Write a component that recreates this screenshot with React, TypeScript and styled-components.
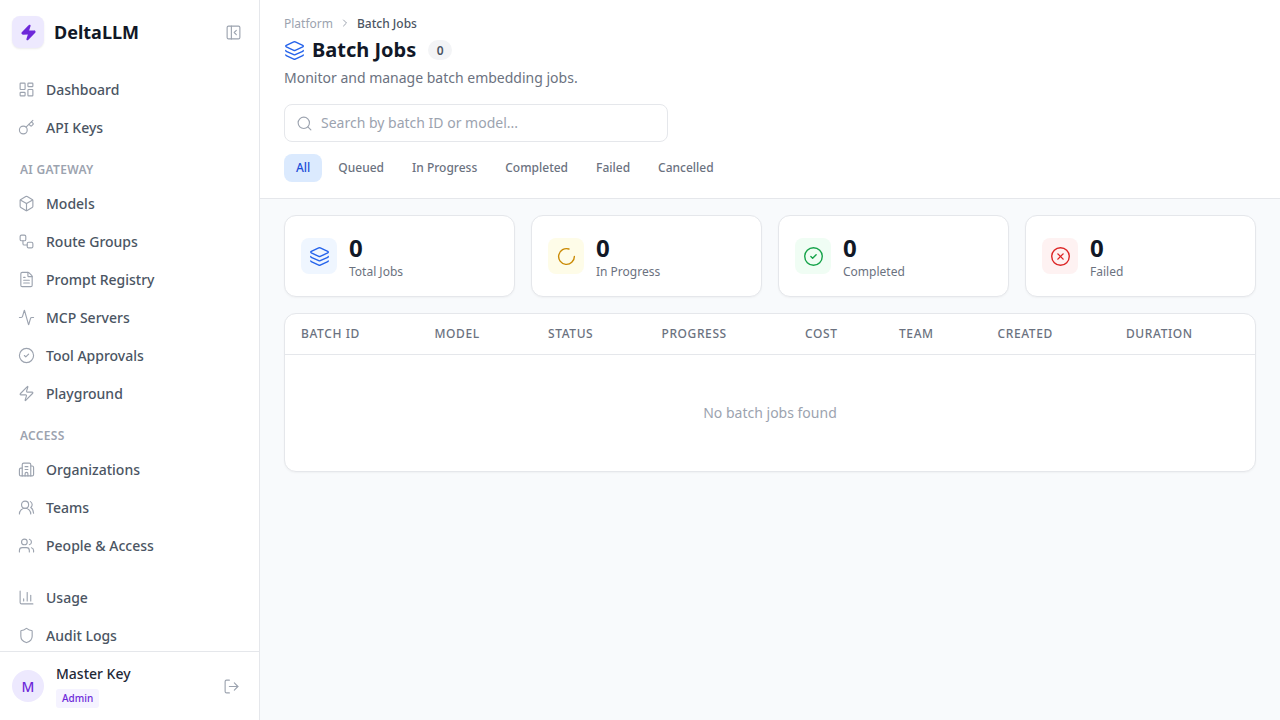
import React from 'react';
import styled, { createGlobalStyle } from 'styled-components';
import {
  Activity,
  Box,
  Building2,
  ChartColumn,
  ChevronRight,
  CircleCheck,
  CircleX,
  FileText,
  Key,
  Layers,
  LayoutDashboard,
  LoaderCircle,
  LogOut,
  PanelLeftClose,
  Search,
  Shield,
  Users,
  UsersRound,
  Workflow,
  Zap,
} from 'lucide-react';

const GlobalStyle = createGlobalStyle`
  * { box-sizing: border-box; }
  html, body { margin: 0; height: 100%; overflow: hidden; }
  body {
    font-family: "Noto Sans", "Liberation Sans", sans-serif;
    background: #f8fafc;
    color: #111827;
  }
`;

const Shell = styled.div`
  display: flex;
  width: 1280px;
  height: 720px;
`;

const Sidebar = styled.aside`
  width: 260px;
  flex-shrink: 0;
  background: #fff;
  border-right: 1px solid #e5e7eb;
  display: flex;
  flex-direction: column;
`;

const Brand = styled.div`
  height: 64px;
  padding: 0 17.5px 0 12px;
  display: flex;
  align-items: center;
  gap: 10px;
`;

const LogoTile = styled.div`
  width: 32px;
  height: 32px;
  border-radius: 8px;
  background: #ede9fe;
  color: #6d28d9;
  display: flex;
  align-items: center;
  justify-content: center;
  box-shadow: 0 1px 2px rgba(0, 0, 0, 0.08);
`;

const BrandName = styled.div`
  flex: 1;
  font-size: 18px;
  font-weight: 700;
  color: #111827;
`;

const Nav = styled.nav`
  flex: 1;
  min-height: 0;
  overflow: hidden;
  padding-top: 6px;
  display: flex;
  flex-direction: column;
`;

const NavItem = styled.a`
  height: 38px;
  flex-shrink: 0;
  padding-left: 17.5px;
  display: flex;
  align-items: center;
  gap: 11.5px;
  font-size: 14px;
  font-weight: 500;
  color: #4b5563;
  svg { color: #9ca3af; }
`;

const NavHeading = styled.div`
  height: 28px;
  flex-shrink: 0;
  margin: 9px 0 1px;
  padding-left: 20px;
  display: flex;
  align-items: center;
  font-size: 12px;
  font-weight: 600;
  letter-spacing: 0.3px;
  color: #9ca3af;
`;

const NavGap = styled.div`
  height: 14px;
  flex-shrink: 0;
`;

const UserBar = styled.div`
  height: 69px;
  flex-shrink: 0;
  border-top: 1px solid #e5e7eb;
  padding: 0 19.5px 0 12px;
  display: flex;
  align-items: center;
  gap: 12px;
  color: #9ca3af;
`;

const Avatar = styled.div`
  width: 32px;
  height: 32px;
  border-radius: 50%;
  background: #ede9fe;
  color: #6d28d9;
  font-size: 14px;
  font-weight: 500;
  display: flex;
  align-items: center;
  justify-content: center;
`;

const UserInfo = styled.div`
  flex: 1;
  padding-bottom: 1px;
`;

const UserName = styled.div`
  font-size: 14px;
  font-weight: 500;
  line-height: 20px;
  color: #1f2937;
`;

const RoleTag = styled.span`
  display: inline-block;
  margin-top: 5px;
  padding: 0 6px;
  height: 19px;
  line-height: 19px;
  font-size: 10px;
  font-weight: 500;
  border-radius: 3px;
  color: #6d28d9;
  background: #f5f3ff;
`;

const Main = styled.main`
  flex: 1;
  min-width: 0;
  display: flex;
  flex-direction: column;
`;

const PageHead = styled.header`
  height: 199px;
  background: #fff;
  border-bottom: 1px solid #e5e7eb;
  padding: 14px 24px 0;
`;

const Crumbs = styled.div`
  height: 18px;
  display: flex;
  align-items: center;
  gap: 6px;
  font-size: 12px;
  color: #9ca3af;
  svg { color: #9ca3af; }
`;

const CrumbNow = styled.span`
  font-weight: 500;
  color: #4b5563;
`;

const TitleRow = styled.div`
  margin-top: 2px;
  height: 32px;
  display: flex;
  align-items: center;
  color: #2563eb;
`;

const Title = styled.h1`
  margin: 0 12px 0 7px;
  font-size: 20px;
  line-height: 32px;
  font-weight: 700;
  color: #111827;
`;

const CountPill = styled.span`
  min-width: 24px;
  height: 20px;
  border-radius: 10px;
  background: #f3f4f6;
  color: #4b5563;
  font-size: 12px;
  font-weight: 600;
  display: flex;
  align-items: center;
  justify-content: center;
`;

const Subtitle = styled.p`
  margin: 2px 0 0;
  font-size: 14px;
  line-height: 20px;
  color: #6b7280;
`;

const SearchBox = styled.label`
  margin-top: 16px;
  width: 384px;
  height: 38px;
  padding: 0 10.5px;
  border: 1px solid #e5e7eb;
  border-radius: 8px;
  background: #fff;
  display: flex;
  align-items: center;
  gap: 8.5px;
  color: #9ca3af;
`;

const SearchInput = styled.input`
  flex: 1;
  border: 0;
  outline: 0;
  padding: 0 0 1px;
  font: inherit;
  font-size: 14px;
  background: transparent;
  &::placeholder { color: #9ca3af; opacity: 1; }
`;

const Tabs = styled.div`
  margin-top: 12px;
  display: flex;
  gap: 4px;
`;

const Tab = styled.button<{ $active?: boolean }>`
  height: 28px;
  padding: 0 12px 1px;
  border: 0;
  border-radius: 8px;
  font-family: inherit;
  font-size: 12px;
  font-weight: 500;
  color: ${(p) => (p.$active ? '#1d4ed8' : '#6b7280')};
  background: ${(p) => (p.$active ? '#dbeafe' : 'transparent')};
`;

const Body = styled.div`
  flex: 1;
  padding: 16px 24px;
`;

const StatGrid = styled.div`
  display: grid;
  grid-template-columns: repeat(4, 1fr);
  gap: 16px;
`;

const StatCard = styled.div`
  height: 82px;
  padding: 0 16px;
  background: #fff;
  border: 1px solid #e5e7eb;
  border-radius: 12px;
  box-shadow: 0 1px 2px rgba(0, 0, 0, 0.04);
  display: flex;
  align-items: center;
  gap: 12px;
`;

const StatIcon = styled.div<{ $bg: string; $fg: string }>`
  width: 36px;
  height: 36px;
  border-radius: 8px;
  background: ${(p) => p.$bg};
  color: ${(p) => p.$fg};
  display: flex;
  align-items: center;
  justify-content: center;
`;

const StatValue = styled.div`
  font-size: 24px;
  font-weight: 700;
  line-height: 32px;
  color: #111827;
`;

const StatLabel = styled.div`
  font-size: 12px;
  line-height: 16px;
  color: #6b7280;
`;

const TableCard = styled.section`
  margin-top: 16px;
  height: 159px;
  background: #fff;
  border: 1px solid #e5e7eb;
  border-radius: 12px;
  box-shadow: 0 1px 2px rgba(0, 0, 0, 0.04);
`;

const TableHead = styled.div`
  height: 41px;
  padding: 0 0 2px 16px;
  border-bottom: 1px solid #e5e7eb;
  display: grid;
  grid-template-columns: 133.5px 113.5px 113.5px 143.5px 94px 98.5px 128.5px 1fr;
  align-items: center;
`;

const HeadCell = styled.div`
  font-size: 12px;
  font-weight: 500;
  letter-spacing: 0.6px;
  color: #6b7280;
`;

const EmptyRow = styled.div`
  height: 116px;
  padding-bottom: 2px;
  display: flex;
  align-items: center;
  justify-content: center;
  font-size: 14px;
  color: #9ca3af;
`;

const stroke = 1.6;

const App = () => {
  return (
    <Shell>
      <GlobalStyle />
      <Sidebar>
        <Brand>
          <LogoTile>
            <Zap size={17} fill="currentColor" />
          </LogoTile>
          <BrandName>DeltaLLM</BrandName>
          <PanelLeftClose size={17} strokeWidth={stroke} color="#9ca3af" />
        </Brand>
        <Nav>
          <NavItem><LayoutDashboard size={17} strokeWidth={stroke} />Dashboard</NavItem>
          <NavItem><Key size={17} strokeWidth={stroke} />API Keys</NavItem>
          <NavHeading>AI GATEWAY</NavHeading>
          <NavItem><Box size={17} strokeWidth={stroke} />Models</NavItem>
          <NavItem><Workflow size={17} strokeWidth={stroke} />Route Groups</NavItem>
          <NavItem><FileText size={17} strokeWidth={stroke} />Prompt Registry</NavItem>
          <NavItem><Activity size={17} strokeWidth={stroke} />MCP Servers</NavItem>
          <NavItem><CircleCheck size={17} strokeWidth={stroke} />Tool Approvals</NavItem>
          <NavItem><Zap size={17} strokeWidth={stroke} />Playground</NavItem>
          <NavHeading>ACCESS</NavHeading>
          <NavItem><Building2 size={17} strokeWidth={stroke} />Organizations</NavItem>
          <NavItem><UsersRound size={17} strokeWidth={stroke} />Teams</NavItem>
          <NavItem><Users size={17} strokeWidth={stroke} />People &amp; Access</NavItem>
          <NavGap />
          <NavItem><ChartColumn size={17} strokeWidth={stroke} />Usage</NavItem>
          <NavItem><Shield size={17} strokeWidth={stroke} />Audit Logs</NavItem>
        </Nav>
        <UserBar>
          <Avatar>M</Avatar>
          <UserInfo>
            <UserName>Master Key</UserName>
            <RoleTag>Admin</RoleTag>
          </UserInfo>
          <LogOut size={17} strokeWidth={stroke} />
        </UserBar>
      </Sidebar>
      <Main>
        <PageHead>
          <Crumbs>
            <span>Platform</span>
            <ChevronRight size={12} />
            <CrumbNow>Batch Jobs</CrumbNow>
          </Crumbs>
          <TitleRow>
            <Layers size={21} strokeWidth={stroke} />
            <Title>Batch Jobs</Title>
            <CountPill>0</CountPill>
          </TitleRow>
          <Subtitle>Monitor and manage batch embedding jobs.</Subtitle>
          <SearchBox>
            <Search size={17} strokeWidth={stroke} />
            <SearchInput placeholder="Search by batch ID or model..." />
          </SearchBox>
          <Tabs>
            <Tab $active>All</Tab>
            <Tab>Queued</Tab>
            <Tab>In Progress</Tab>
            <Tab>Completed</Tab>
            <Tab>Failed</Tab>
            <Tab>Cancelled</Tab>
          </Tabs>
        </PageHead>
        <Body>
          <StatGrid>
            <StatCard>
              <StatIcon $bg="#eff6ff" $fg="#2563eb"><Layers size={21} strokeWidth={stroke} /></StatIcon>
              <div><StatValue>0</StatValue><StatLabel>Total Jobs</StatLabel></div>
            </StatCard>
            <StatCard>
              <StatIcon $bg="#fefce8" $fg="#ca8a04"><LoaderCircle size={21} strokeWidth={stroke} /></StatIcon>
              <div><StatValue>0</StatValue><StatLabel>In Progress</StatLabel></div>
            </StatCard>
            <StatCard>
              <StatIcon $bg="#f0fdf4" $fg="#16a34a"><CircleCheck size={21} strokeWidth={stroke} /></StatIcon>
              <div><StatValue>0</StatValue><StatLabel>Completed</StatLabel></div>
            </StatCard>
            <StatCard>
              <StatIcon $bg="#fef2f2" $fg="#dc2626"><CircleX size={21} strokeWidth={stroke} /></StatIcon>
              <div><StatValue>0</StatValue><StatLabel>Failed</StatLabel></div>
            </StatCard>
          </StatGrid>
          <TableCard>
            <TableHead>
              <HeadCell>BATCH ID</HeadCell>
              <HeadCell>MODEL</HeadCell>
              <HeadCell>STATUS</HeadCell>
              <HeadCell>PROGRESS</HeadCell>
              <HeadCell>COST</HeadCell>
              <HeadCell>TEAM</HeadCell>
              <HeadCell>CREATED</HeadCell>
              <HeadCell>DURATION</HeadCell>
            </TableHead>
            <EmptyRow>No batch jobs found</EmptyRow>
          </TableCard>
        </Body>
      </Main>
    </Shell>
  );
};

export default App;
